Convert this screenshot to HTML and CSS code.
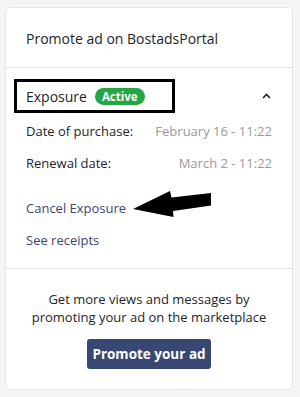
FILE: index.html
```html
<!DOCTYPE html>
<html>
<head>
<meta charset="utf-8">
<link rel="stylesheet" href="styles.css">
</head>
<body>
<div class="card">
  <div class="card-header">Promote ad on BostadsPortal</div>
  <div class="card-section">
    <div class="exp-row">
      <span class="exp-title">Exposure</span>
      <span class="badge">Active</span>
      <svg class="chev" width="9" height="6" viewBox="0 0 9 6"><path d="M1 5 L4.5 1.5 L8 5" fill="none" stroke="#222" stroke-width="1.6"/></svg>
      <div class="highlight-box"></div>
    </div>
    <div class="info-row first"><span class="label">Date of purchase:</span><span class="value">February 16 - 11:22</span></div>
    <div class="info-row"><span class="label">Renewal date:</span><span class="value">March 2 - 11:22</span></div>
    <div class="links">
      <a class="link cancel">Cancel Exposure
        <svg class="arrow" width="80" height="28" viewBox="0 0 80 28"><polygon points="0,18 37,0 38.5,6.5 78,2 78,14.5 40,20 40.5,26" fill="#000"/></svg>
      </a>
      <a class="link">See receipts</a>
    </div>
  </div>
  <div class="card-footer">
    <p class="promo-text">Get more views and messages by promoting your ad on the marketplace</p>
    <button class="btn">Promote your ad</button>
  </div>
</div>
</body>
</html>
```
FILE: styles.css
```css
html, body { margin: 0; padding: 0; }
body {
  background: #f5f5f5;
  font-family: "Open Sans", "Noto Sans", sans-serif;
  color: #212529;
  font-size: 13px;
  width: 300px;
  height: 397px;
  padding: 7px 0 0 5px;
  box-sizing: border-box;
}
.card {
  width: 288px;
  height: 383px;
  box-sizing: border-box;
  background: #fff;
  border: 1px solid #e6e6e6;
  border-radius: 5px;
  display: flex;
  flex-direction: column;
}
.card-header {
  height: 60px;
  box-sizing: border-box;
  border-bottom: 1px solid #e6e6e6;
  padding: 0 20px;
  display: flex;
  align-items: center;
  font-size: 14px;
  padding-top: 2px;
}
.card-section {
  height: 201px;
  box-sizing: border-box;
  border-bottom: 1px solid #e6e6e6;
  padding: 17px 20px 0 20px;
}
.exp-row {
  position: relative;
  display: flex;
  align-items: center;
  height: 22px;
}
.exp-title { font-size: 14px; }
.badge {
  margin-left: 8px;
  background: #23a643;
  color: #fff;
  font-weight: 700;
  font-size: 11.5px;
  border-radius: 9px;
  height: 17px;
  line-height: 17px;
  padding: 0 7px;
}
.chev { margin-left: auto; margin-right: 1px; }
.highlight-box {
  position: absolute;
  left: -12px;
  top: -6px;
  width: 161px;
  height: 34px;
  box-sizing: border-box;
  border: 3px solid #000;
}
.info-row {
  display: flex;
  justify-content: space-between;
  height: 32px;
  align-items: center;
}
.info-row.first { margin-top: 8px; }
.label { font-size: 13px; font-weight: 500; }
.value { color: #9a9a9a; font-size: 13px; }
.links { margin-top: 13px; display: flex; flex-direction: column; }
.link {
  position: relative;
  color: #3b4670;
  font-size: 13px;
  height: 32px;
  line-height: 32px;
  align-self: flex-start;
}
.arrow { position: absolute; left: 107px; top: -1px; }
.card-footer {
  flex: 1;
  display: flex;
  flex-direction: column;
  align-items: center;
  padding-top: 22px;
}
.promo-text {
  margin: 0;
  text-align: center;
  font-size: 13px;
  line-height: 17.5px;
  width: 240px;
}
.btn {
  margin-top: 13px;
  background: #384872;
  color: #fff;
  border: none;
  border-radius: 3px;
  font-family: inherit;
  font-weight: 700;
  font-size: 13.5px;
  height: 30px;
  width: 124px;
  padding: 0;
}
```
